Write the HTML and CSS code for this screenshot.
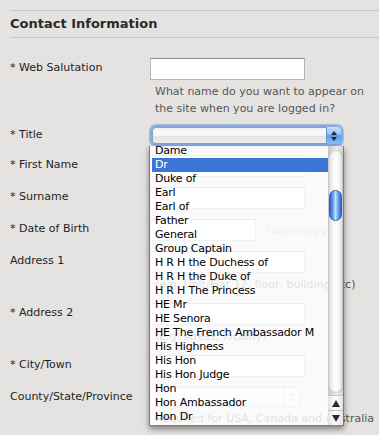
FILE: index.html
```html
<!DOCTYPE html>
<html>
<head>
<meta charset="utf-8">
<title>Contact Information</title>
<link rel="stylesheet" href="styles.css">
</head>
<body>
<div class="page">
  <h2 class="section-title">Contact Information</h2>
  <div class="form">
    <div class="row row-first">
      <label class="lbl">* Web Salutation</label>
      <div class="field">
        <div class="input w155"></div>
        <p class="help">What name do you want to appear on<br>the site when you are logged in?</p>
      </div>
    </div>
    <div class="row row-title">
      <label class="lbl">* Title</label>
      <div class="field">
        <div class="select">
          <div class="select-btn"><span class="tri-up"></span><span class="tri-down"></span></div>
        </div>
        <div class="menu">
          <ul class="menu-list">
            <li>Dame</li>
            <li class="sel">Dr</li>
            <li>Duke of</li>
            <li>Earl</li>
            <li>Earl of</li>
            <li>Father</li>
            <li>General</li>
            <li>Group Captain</li>
            <li>H R H the Duchess of</li>
            <li>H R H the Duke of</li>
            <li>H R H The Princess</li>
            <li>HE Mr</li>
            <li>HE Senora</li>
            <li>HE The French Ambassador M</li>
            <li>His Highness</li>
            <li>His Hon</li>
            <li>His Hon Judge</li>
            <li>Hon</li>
            <li>Hon Ambassador</li>
            <li>Hon Dr</li>
            <li>Hon Lady</li>
          </ul>
          <div class="scroll">
            <div class="track"></div>
            <div class="thumb"></div>
            <div class="sbtn"><span class="tri-up dark"></span></div>
            <div class="sbtn"><span class="tri-down dark"></span></div>
          </div>
        </div>
      </div>
    </div>
    <div class="row">
      <label class="lbl">* First Name</label>
      <div class="field"><div class="input w155"></div></div>
    </div>
    <div class="row">
      <label class="lbl">* Surname</label>
      <div class="field"><div class="input w155"></div></div>
    </div>
    <div class="row">
      <label class="lbl">* Date of Birth</label>
      <div class="field inline"><div class="input w106"></div><span class="hint">(dd/mm/yyyy)</span></div>
    </div>
    <div class="row">
      <label class="lbl">Address 1</label>
      <div class="field">
        <div class="input w155"></div>
        <p class="help">(e.g. Unit/Flat 12, floor, building etc)</p>
      </div>
    </div>
    <div class="row">
      <label class="lbl">* Address 2</label>
      <div class="field">
        <div class="input w155"></div>
        <p class="help">(e.g. street, locality)</p>
      </div>
    </div>
    <div class="row">
      <label class="lbl">* City/Town</label>
      <div class="field"><div class="input w155"></div></div>
    </div>
    <div class="row">
      <label class="lbl">County/State/Province</label>
      <div class="field">
        <div class="cselect"><div class="cbtn"><span class="tri-up light"></span><span class="tri-down light"></span></div></div>
        <p class="help">Required for USA, Canada and Australia</p>
      </div>
    </div>
  </div>
</div>
</body>
</html>
```
FILE: styles.css
```css
* { box-sizing: border-box; }
html, body { margin: 0; padding: 0; }
body {
  background: #e4e3e1;
  font-family: "DejaVu Sans", Verdana, sans-serif;
  font-size: 11px;
  color: #1e1e1e;
  width: 379px;
  height: 435px;
  overflow: hidden;
}
.page { padding: 10px 0 0 10px; }
.section-title {
  margin: 0;
  padding: 0;
  border-top: 1px solid #c9c8c6;
  border-bottom: 1px solid #c9c8c6;
  font-size: 13px;
  font-weight: bold;
  line-height: 26px;
  color: #2a2a2a;
}
.form { margin-top: 20px; }
.row { display: flex; margin-bottom: 10px; }
.row-first { margin-bottom: 8px; }
.row-title { margin-bottom: 9px; }
.lbl { width: 140px; flex: none; line-height: 20px; }
.field { position: relative; flex: none; }
.inline { display: flex; align-items: center; gap: 11px; }
.input {
  height: 22px;
  background: #fff;
  border: 1px solid #b6b6b6;
  border-top-color: #8e8e8e;
}
.w155 { width: 155px; }
.w106 { width: 106px; }
.hint { color: #a5a5a5; }
.help {
  margin: 3px 0 0 5px;
  line-height: 17px;
  color: #565656;
  white-space: nowrap;
}

/* Focused title select */
.select {
  position: relative;
  width: 193px;
  height: 21px;
  border-radius: 6px;
  border: 2px solid #86abe2;
  box-shadow: 0 0 1px 1px rgba(110, 155, 220, 0.55), inset 0 0 0 1px #8e9fb8;
  background: linear-gradient(#e9e9e9, #fbfbfb 25%, #f4f4f4 50%, #e4e4e4 55%, #eeeeee 100%);
}
.select-btn {
  position: absolute;
  right: 0;
  top: 0;
  bottom: 0;
  width: 15px;
  border-radius: 0 4px 4px 0;
  border-left: 1px solid #6f94cc;
  background: linear-gradient(#c9e0fb, #8fc0f6 45%, #5c9df0 50%, #86bdf7 100%);
  display: flex;
  flex-direction: column;
  align-items: center;
  justify-content: center;
  gap: 2px;
}
.tri-up, .tri-down {
  display: block;
  width: 0;
  height: 0;
  border-left: 3px solid transparent;
  border-right: 3px solid transparent;
}
.tri-up { border-bottom: 4px solid #1d2a3a; }
.tri-down { border-top: 4px solid #1d2a3a; }
.tri-up.dark { border-left-width: 4px; border-right-width: 4px; border-bottom: 7px solid #2a2a2a; }
.tri-down.dark { border-left-width: 4px; border-right-width: 4px; border-top: 7px solid #2a2a2a; }
.tri-up.light { border-bottom-color: #c5cbd3; }
.tri-down.light { border-top-color: #c5cbd3; }

/* Open popup menu */
.menu {
  position: absolute;
  left: -1px;
  top: 21px;
  width: 195px;
  height: 280px;
  z-index: 5;
  display: flex;
  overflow: hidden;
  border: 1px solid rgba(0, 0, 0, 0.5);
  border-top: none;
  background: rgba(255, 255, 255, 0.82);
  box-shadow: 0 3px 6px rgba(0, 0, 0, 0.45);
}
.menu-list {
  flex: 1;
  margin: -2px 0 0;
  padding: 0 0 0 2px;
  list-style: none;
}
.menu-list li {
  height: 14px;
  line-height: 14px;
  padding-left: 3px;
  color: #000;
  letter-spacing: -0.2px;
  white-space: nowrap;
}
.menu-list li.sel { background: #3b76d6; color: #fff; }

.scroll {
  position: relative;
  width: 15px;
  flex: none;
  display: flex;
  flex-direction: column;
  background: linear-gradient(to right, #c6c6c6, #e4e4e4 40%, #ececec 60%, #cfcfcf);
}
.track {
  flex: 1;
  margin: 4px 0 2px;
  border-radius: 7px;
  background: linear-gradient(to right, #d8d8d8, #f6f6f6 35%, #ffffff 55%, #f0f0f0 80%, #d6d6d6);
  box-shadow: inset 0 1px 2px rgba(0, 0, 0, 0.18), inset 0 -1px 2px rgba(0, 0, 0, 0.18);
}
.thumb {
  position: absolute;
  left: 1px;
  top: 44px;
  width: 13px;
  height: 31px;
  border-radius: 7px;
  border: 1px solid #2f5fb5;
  background: linear-gradient(to right, #2c66cf, #6da6f1 30%, #c4dfff 50%, #6ea8f1 72%, #2d66cc);
}
.sbtn {
  height: 15px;
  flex: none;
  display: flex;
  align-items: center;
  justify-content: center;
  border-top: 1px solid #c2c2c2;
  background: linear-gradient(to right, #e2e2e2, #fdfdfd 50%, #e4e4e4);
}

/* County select (behind popup) */
.cselect {
  position: relative;
  width: 150px;
  height: 20px;
  border: 1px solid #b4b4b4;
  border-radius: 4px;
  background: linear-gradient(#ffffff, #ececec);
}
.cbtn {
  position: absolute;
  right: 0;
  top: 0;
  bottom: 0;
  width: 16px;
  border-left: 1px solid #c8c8c8;
  display: flex;
  flex-direction: column;
  align-items: center;
  justify-content: center;
  gap: 2px;
}
```
